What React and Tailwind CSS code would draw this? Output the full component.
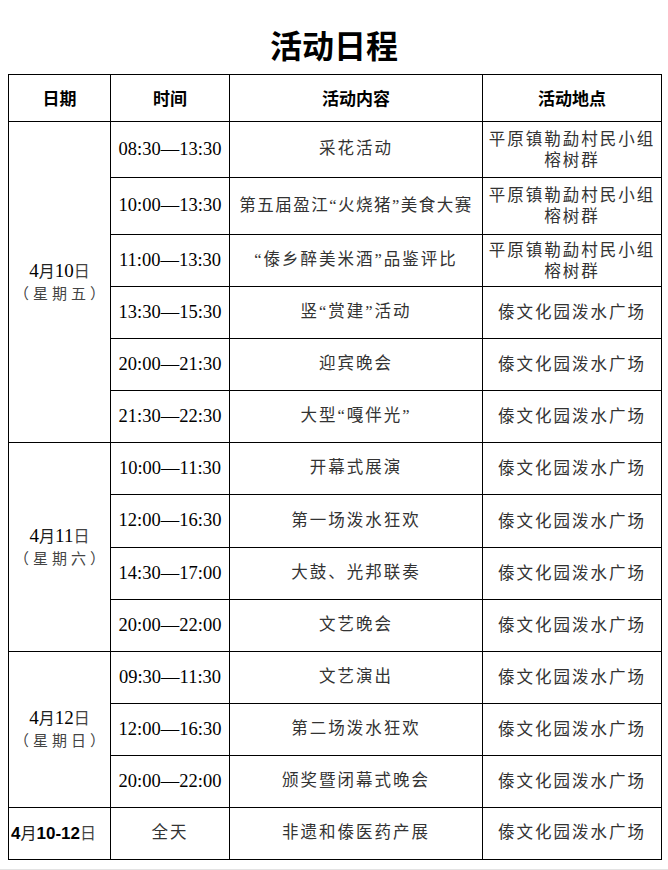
import React from "react";

const LOC1 = (
  <>
    平原镇勒勐村民小组
    <br />
    榕树群
  </>
);
const LOC2 = "傣文化园泼水广场";

const groups = [
  {
    d: "10",
    w: "五",
    span: "row-span-6",
    rows: [
      ["08:30—13:30", "采花活动", LOC1],
      ["10:00—13:30", "第五届盈江“火烧猪”美食大赛", LOC1, true],
      ["11:00—13:30", "“傣乡醉美米酒”品鉴评比", LOC1],
      ["13:30—15:30", "竖“赏建”活动", LOC2],
      ["20:00—21:30", "迎宾晚会", LOC2],
      ["21:30—22:30", "大型“嘎伴光”", LOC2],
    ],
  },
  {
    d: "11",
    w: "六",
    span: "row-span-4",
    rows: [
      ["10:00—11:30", "开幕式展演", LOC2],
      ["12:00—16:30", "第一场泼水狂欢", LOC2],
      ["14:30—17:00", "大鼓、光邦联奏", LOC2],
      ["20:00—22:00", "文艺晚会", LOC2],
    ],
  },
  {
    d: "12",
    w: "日",
    span: "row-span-3",
    rows: [
      ["09:30—11:30", "文艺演出", LOC2],
      ["12:00—16:30", "第二场泼水狂欢", LOC2],
      ["20:00—22:00", "颁奖暨闭幕式晚会", LOC2],
    ],
  },
];

const cell =
  "border-r border-b border-black flex items-center justify-center text-center";
const serif = "font-['Liberation_Serif','Noto_Sans_CJK_SC',serif]";
const sans = "font-['Noto_Sans_CJK_SC',sans-serif]";
const arial = "font-['Liberation_Sans',sans-serif]";

export default function App() {
  return (
    <div className="w-[668px] h-[870px] bg-white flex flex-col overflow-hidden">
      <div
        className={`h-[74px] flex items-center justify-center pt-[14px] text-[32px] font-bold text-black ${sans}`}
      >
        活动日程
      </div>
      <div className="ml-[8px] w-[654px] grid grid-cols-[102px_119px_253px_179px] grid-rows-[47px_56px_57px_52px_52px_52px_52px_52px_53px_52px_52px_52px_52px_52px_52px] border-t border-l border-black">
        {["日期", "时间", "活动内容", "活动地点"].map((h) => (
          <div key={h} className={`${cell} text-[17px] font-bold text-black ${sans}`}>
            {h}
          </div>
        ))}
        {groups.map((g) => (
          <React.Fragment key={g.d}>
            <div className={`${cell} ${g.span} flex-col ${serif}`}>
              <div className="text-[17px] leading-[22px] text-[#222]">
                <span className="text-[19px] text-black">4</span>
                <span className="text-[16px]">月</span>
                <span className="text-[19px] text-black">{g.d}</span>
                <span className="text-[16px] text-[#444]">日</span>
              </div>
              <div className="text-[15px] leading-[22px] tracking-[4px] text-[#444] pl-[4px]">
                （星期{g.w}）
              </div>
            </div>
            {g.rows.map((r, i) => (
              <React.Fragment key={i}>
                <div className={`${cell} text-[18.5px] text-black ${serif}`}>{r[0]}</div>
                <div
                  className={`${cell} text-[16.5px] text-[#333] whitespace-nowrap ${serif} ${
                    r[3] ? "tracking-[1.5px]" : "tracking-[2px]"
                  }`}
                >
                  {r[1]}
                </div>
                <div
                  className={`${cell} text-[16.5px] leading-[21px] text-[#333] tracking-[2px] ${serif}`}
                >
                  <div>{r[2]}</div>
                </div>
              </React.Fragment>
            ))}
          </React.Fragment>
        ))}
        <div className={`${cell} text-[16px] text-[#222] pl-[2px] justify-start ${serif}`}>
          <span className={`font-bold text-[17px] text-black ${arial}`}>4</span>
          <span>月</span>
          <span className={`font-bold text-[17px] text-black ${arial}`}>10-12</span>
          <span className="text-[#444]">日</span>
        </div>
        <div className={`${cell} text-[16.5px] text-[#333] tracking-[2px] ${serif}`}>全天</div>
        <div className={`${cell} text-[16.5px] text-[#333] tracking-[2px] ${serif}`}>
          非遗和傣医药产展
        </div>
        <div className={`${cell} text-[16.5px] text-[#333] tracking-[2px] ${serif}`}>{LOC2}</div>
      </div>
      <div className="mt-[9px] h-[1px] bg-[#e3e3e3]" />
    </div>
  );
}
